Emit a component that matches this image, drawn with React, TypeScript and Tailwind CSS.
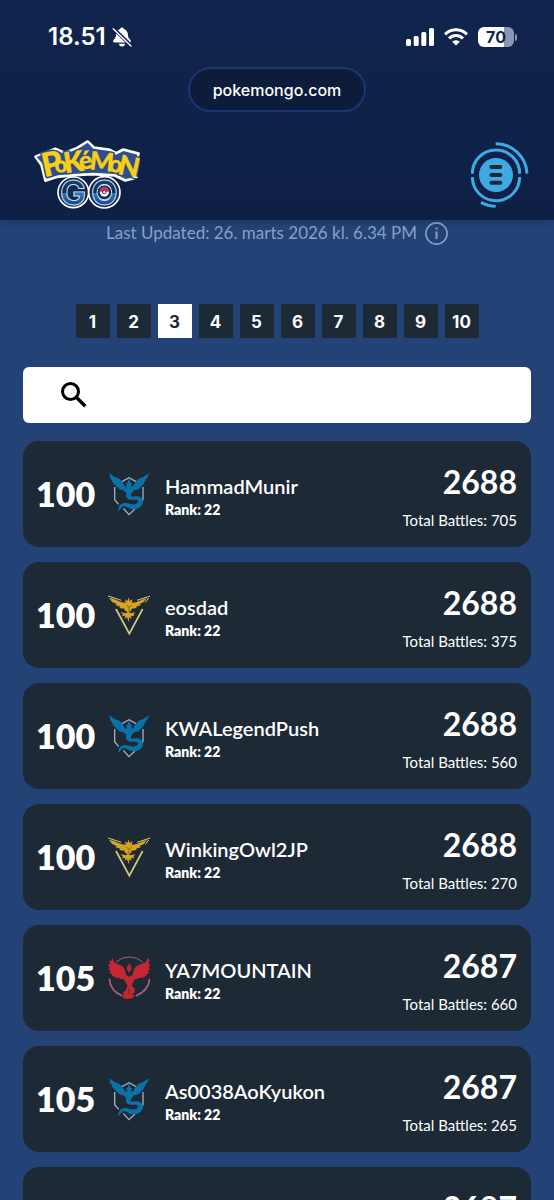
import React from 'react';

type Team = 'mystic' | 'instinct' | 'valor';

interface Trainer {
    position: number;
    team: Team;
    name: string;
    rank: number;
    score: number;
    battles: number;
}

const trainers: Trainer[] = [
    { position: 100, team: 'mystic', name: 'HammadMunir', rank: 22, score: 2688, battles: 705 },
    { position: 100, team: 'instinct', name: 'eosdad', rank: 22, score: 2688, battles: 375 },
    { position: 100, team: 'mystic', name: 'KWALegendPush', rank: 22, score: 2688, battles: 560 },
    { position: 100, team: 'instinct', name: 'WinkingOwl2JP', rank: 22, score: 2688, battles: 270 },
    { position: 105, team: 'valor', name: 'YA7MOUNTAIN', rank: 22, score: 2687, battles: 660 },
    { position: 105, team: 'mystic', name: 'As0038AoKyukon', rank: 22, score: 2687, battles: 265 },
];

const pages = [1, 2, 3, 4, 5, 6, 7, 8, 9, 10];

const BellOffIcon = () => (
    <svg viewBox="0 0 20 20" className="h-5 w-5">
        <path fill="#fff" d="M10 .5c-.9 0-1.6.6-1.8 1.4C5.6 2.7 4.200 4.900 4.100 7.600 4 11.200 2.400 12 1.300 13.500c-.7 1 0 1.900 1 1.900h15.400c1 0 1.700-.9 1-1.900-1.100-1.500-2.700-2.300-2.800-5.900-.1-2.700-1.500-4.900-4.100-5.700C11.600 1.100 10.900.5 10 .5zM6.800 16.800h6.400c-.3 1.700-1.600 2.800-3.200 2.800s-2.900-1.100-3.200-2.800z" />
        <path stroke="#10234b" strokeWidth="3.600" d="M.5.5l19.500 19" />
        <path stroke="#fff" strokeWidth="1.400" strokeLinecap="round" d="M1.200 1.800l17.800 17.200" />
    </svg>
);

const SignalIcon = () => (
    <svg viewBox="0 0 28 18" className="h-[18px] w-7" fill="#fff">
        <rect x="0" y="11" width="5" height="7" rx="1.500" />
        <rect x="7.700" y="8" width="5" height="10" rx="1.500" />
        <rect x="15.300" y="4" width="5" height="14" rx="1.500" />
        <rect x="23" y="0" width="5" height="18" rx="1.500" />
    </svg>
);

const WifiIcon = () => (
    <svg viewBox="0 0 24 18" className="h-[18px] w-6">
        <g fill="none" stroke="#fff" strokeWidth="3">
            <path d="M1.100 6.400C7.200.2 16.800.2 22.900 6.400" />
            <path d="M5 10.400C9 6.500 15 6.500 19 10.400" />
        </g>
        <path fill="#fff" d="M12 17.600l-3.800-3.900c2.200-2 5.400-2 7.600 0z" />
    </svg>
);

const Battery = () => (
    <div className="flex items-center gap-px">
        <div className="flex h-5 w-9 items-center justify-center rounded-md bg-linear-to-r from-white from-72% to-[#8b96b0] to-72% text-[16px] font-bold text-[#10234b]">
            70
        </div>
        <div className="h-[7px] w-0.5 rounded-r-full bg-[#8b96b0]" />
    </div>
);

// x, baseline, size, tilt
const logoLetters: [string, number, number, number, number][] = [
    ['P', 73, 141, 98, -12],
    ['o', 107, 130, 66, -10],
    ['K', 135, 130, 86, -8],
    ['é', 180, 119, 74, -8],
    ['M', 207, 118, 76, 6],
    ['o', 264, 124, 70, 8],
    ['N', 290, 131, 82, 12],
];

const LogoText = ({ className, strokeWidth }: { className: string, strokeWidth: number }) => (
    <g className={className} strokeWidth={strokeWidth} strokeLinejoin="round">
        {logoLetters.map(([char, x, y, size, tilt], i) => (
            <text key={i} x={x} y={y} fontSize={size} transform={`rotate(${tilt} ${x} ${y})`}>{char}</text>
        ))}
    </g>
);

const Logo = () => (
    <svg viewBox="42 30 318 210" className="h-[70px] w-[106px] font-['Lato',sans-serif] font-black" role="img" aria-label="Pokémon GO">
        <defs>
            <linearGradient id="go" gradientUnits="userSpaceOnUse" x1="0" y1="140" x2="0" y2="234">
                <stop offset="0" stopColor="#17467c" />
                <stop offset="0.520" stopColor="#102c55" />
                <stop offset="0.520" stopColor="#2f74bd" />
                <stop offset="1" stopColor="#123c78" />
            </linearGradient>
        </defs>
        <path fill="#fff" stroke="#fff" strokeWidth="7" strokeLinejoin="round" d="M46 80l60-24 28 12 36-14 33-20 19 18 48 7 18 10 22-11 46 12-16 76-24 6-32-15-68-4-62 4-42 4-36 12-12-48z" />
        <path fill="#2b4f92" d="M50 81l56-21 28 12 38-14 31-20 17 18 48 7 20 11 23-11 41 11-15 69-20 4-31-15-68-4-62 4-42 4-34 10-12-45z" />
        <g fill="#122b54" stroke="#fff" strokeWidth="5">
            <circle cx="160" cy="187" r="46" />
            <circle cx="253" cy="187" r="47" />
        </g>
        <g className="font-['Inter',sans-serif] font-bold" fill="url(#go)" stroke="#cfdfee" strokeWidth="3" fontSize="104" textAnchor="middle">
            <text x="159" y="225">G</text>
            <text x="253" y="225">O</text>
        </g>
        <circle cx="253" cy="187" r="22" fill="#122b54" stroke="#cfdfee" strokeWidth="3" />
        <circle cx="253" cy="186" r="14" fill="#fff" />
        <path fill="#d92b42" d="M239 185a14 14 0 0 1 28 0z" />
        <circle cx="253" cy="186" r="5" fill="#fff" stroke="#263b62" strokeWidth="3" />
        <LogoText className="fill-[#274b8d] stroke-[#274b8d]" strokeWidth={10} />
        <LogoText className="fill-[#f8cf14] stroke-[#f8cf14]" strokeWidth={1} />
        <path stroke="#fff" strokeWidth="4" d="M342 142h11" />
    </svg>
);

const MenuIcon = () => (
    <svg viewBox="93 36 174 201" className="h-[67px] w-[58px]">
        <circle cx="168" cy="135" r="51" fill="#3fa9e6" />
        <g fill="none" stroke="#3fa9e6" strokeWidth="9">
            <path d="M97 131a71 71 0 0 1 142 0M97 141a71 71 0 0 0 142 0" />
            <path d="M167 41a94 94 0 0 1 94 90M123 217a94 94 0 0 0 44 12" />
        </g>
        <path stroke="#1d2935" strokeWidth="12" strokeLinecap="round" d="M154 111h27M154 135h27M154 158h27" />
    </svg>
);

const SearchIcon = () => (
    <svg viewBox="0 0 26 26" className="h-[26px] w-[26px]" fill="none" stroke="#000" strokeWidth="3">
        <circle cx="9.500" cy="9.500" r="8" />
        <path d="M15.300 15.300l9 9" strokeWidth="3.400" />
    </svg>
);

const MysticEmblem = () => (
    <svg viewBox="24 21 126 132" className="h-11 w-[42px]">
        <path fill="none" stroke="#9cb1c6" strokeWidth="4" d="M66 50l21-12 21 12M44 66v38l12 14M129 66v38l-8 12M70 130l17 19 18-17" />
        <path fill="#0b72a8" d="M28 25L44 36L58 41L67 50L74 63L80 66L80 58L77 53L82 54L84 48L87 42L90 48L92 54L97 53L94 58L94 66L100 63L107 50L116 41L130 36L148 25L142 38L136 43L138 46L132 52L133 55L127 60L126 64L120 67L118 71L110 74L102 76L96 84L92 88L84 88L77 82L70 76L62 74L56 71L54 67L48 65L47 60L41 58L41 53L35 50L37 45L31 41Z" />
        <path fill="#0b72a8" d="M81 82C74 90 79 103 90 104C101 105 110 102 114 107C118 114 104 120 94 118C82 115 74 112 64 117C55 122 57 132 53 138C62 136 62 126 70 124C80 123 86 132 100 133C117 133 130 122 129 108C127 97 117 92 104 94C93 97 90 93 94 85Z" />
    </svg>
);

const InstinctEmblem = () => (
    <svg viewBox="24 39 126 132" className="h-11 w-[42px]">
        <g fill="none" stroke="#d9c987" strokeWidth="3">
            <path d="M24 48l40 13M151 48l-40 13" />
            <path d="M29 54l10 13M146 54l-10 13" />
            <path d="M48 87l40 74 40-74" strokeWidth="5" />
        </g>
        <path fill="#d6a322" d="M32 53l33 14 12 1-2-10 7 5 4-11 3 11 9-5-3 10 13-1 33-14-10 13-13 7 6 2-16 5 2 4-15 2-2 7-7 3 5 4 15-3-6 7 4 5-11-2 2 9-7-4-2 15-5-15-7 4 2-9-11 2 4-5-7-7 16 3 5-4-7-3-3-7-15-2 3-4-16-5 6-2-13-7z" />
        <path fill="none" stroke="#6d4d18" strokeWidth="2" d="M79 76l8 6 8-6M87 82v14" />
    </svg>
);

const ValorEmblem = () => (
    <svg viewBox="24 33 126 132" className="h-11 w-[42px]">
        <g fill="none" stroke="#ad5c7d" strokeWidth="3">
            <path d="M48 51a60 60 0 0 1 80 0" />
            <path d="M28 101c2 25 15 42 38 51M149 101c-2 25-17 42-42 52" strokeWidth="5" />
        </g>
        <path fill="#c42732" d="M37 37L42 52L55 58L67 64L74 73L79 90L88 96L97 90L102 73L109 64L121 58L137 52L145 37L149 50L145 55L151 61L146 67L150 73L144 78L147 84L139 88L140 94L131 95L129 99L119 98L112 102L104 103L100 112L95 123L104 130L104 143L95 148L103 151L99 158L85 162L71 160L66 153L71 148L69 142L77 137L80 129L82 121L76 112L72 103L62 102L56 98L47 99L45 95L36 94L37 88L28 85L32 78L25 74L30 68L24 61L30 55L27 49L34 47Z" />
        <path fill="#c42732" d="M90 51C87 59 80 62 81 71C81 77 85 79 87 84C90 79 95 76 94 69C94 64 92 62 93 58C91 61 90 64 88 68C87 62 91 57 90 51Z" />
        <path fill="none" stroke="#1d2935" strokeWidth="2" d="M86 129c3 7 2 12-2 18" />
    </svg>
);

const emblems: Record<Team, React.FC> = {
    mystic: MysticEmblem,
    instinct: InstinctEmblem,
    valor: ValorEmblem,
};

const TrainerCard: React.FC<{ trainer: Trainer }> = ({ trainer }) => {
    const Emblem = emblems[trainer.team];

    return (
        <li className="flex h-[106px] items-center rounded-2xl bg-[#1d2935] pr-3.5 pl-[13px] text-white">
            <div className="w-[72px] text-[34px] leading-10 font-extrabold">{trainer.position}</div>
            <Emblem />
            <div className="ml-[15px] flex-1 pt-2">
                <div className="text-[20px] leading-6 font-semibold">{trainer.name}</div>
                <div className="text-[14px] leading-6 font-extrabold">Rank: {trainer.rank}</div>
            </div>
            <div className="pt-1.5 text-right">
                <div className="text-[32px] leading-10 font-bold">{trainer.score}</div>
                <div className="mt-1.5 text-[15px] leading-6">Total Battles: {trainer.battles}</div>
            </div>
        </li>
    );
};

const Header = () => (
    <header className="z-10 shrink-0 bg-linear-to-b from-[#10244d] to-[#0e2045] pt-[27px] pb-2.5 shadow-md">
        <div className="flex h-5 items-center justify-between pr-[37px] pl-12 font-['Inter',sans-serif] text-white">
            <div className="flex items-center gap-1.5">
                <span className="text-[24px] leading-5 font-semibold">18.51</span>
                <BellOffIcon />
            </div>
            <div className="flex items-center gap-2.5">
                <SignalIcon />
                <WifiIcon />
                <Battery />
            </div>
        </div>
        <div className="mt-5 flex justify-center">
            <button type="button" className="h-[45px] rounded-full border-2 border-[#1c3474] bg-[#0d1c3a] px-[23px] font-['Inter',sans-serif] text-[16px] font-medium text-white">
                pokemongo.com
            </button>
        </div>
        <div className="mt-7 flex items-center justify-between pr-[25px] pl-[34px]">
            <a href="#home"><Logo /></a>
            <button type="button" aria-label="Menu"><MenuIcon /></button>
        </div>
    </header>
);

const App = () => (
    <div className="flex h-screen flex-col bg-[#234275] font-['Lato',sans-serif]">
        <Header />
        <main className="min-h-0 flex-1 overflow-y-auto px-[23px] pt-px [scrollbar-width:none]">
            <div className="flex items-center justify-center gap-2 text-[#889fcb]">
                <span className="text-[17px] leading-6">Last Updated: 26. marts 2026 kl. 6.34 PM</span>
                <button type="button" aria-label="About the update time">
                    <svg viewBox="0 0 23 23" className="h-[23px] w-[23px]" fill="none" stroke="currentColor">
                        <circle cx="11.500" cy="11.500" r="10.600" strokeWidth="1.600" />
                        <path strokeWidth="2" d="M11.500 5.500v2M11.500 9.500v7.500" />
                    </svg>
                </button>
            </div>
            <nav className="mt-[59px] flex justify-center gap-[7px] font-['Inter',sans-serif] text-[17px] font-bold">
                {pages.map(page => (
                    <button
                        key={page}
                        type="button"
                        className={page === 3 ? 'h-[34px] w-[34px] bg-white pt-1 text-[#1d2935]' : 'h-[34px] w-[34px] bg-[#1d2935] pt-1 text-white'}
                    >
                        {page}
                    </button>
                ))}
            </nav>
            <label className="mt-[29px] flex h-14 items-center rounded-md bg-white pr-4 pl-[38px]">
                <SearchIcon />
                <input type="text" aria-label="Search trainers" className="ml-4 h-full min-w-0 flex-1 text-[18px] text-black outline-none" />
            </label>
            <ul className="mt-[18px] space-y-[15px] pb-6">
                {trainers.map(trainer => <TrainerCard key={trainer.name} trainer={trainer} />)}
                <li className="flex h-[106px] justify-end rounded-2xl bg-[#1d2935] px-3.5 pt-[21px] text-white">
                    <div className="text-[32px] leading-10 font-bold">2687</div>
                </li>
            </ul>
        </main>
    </div>
);

export default App;
